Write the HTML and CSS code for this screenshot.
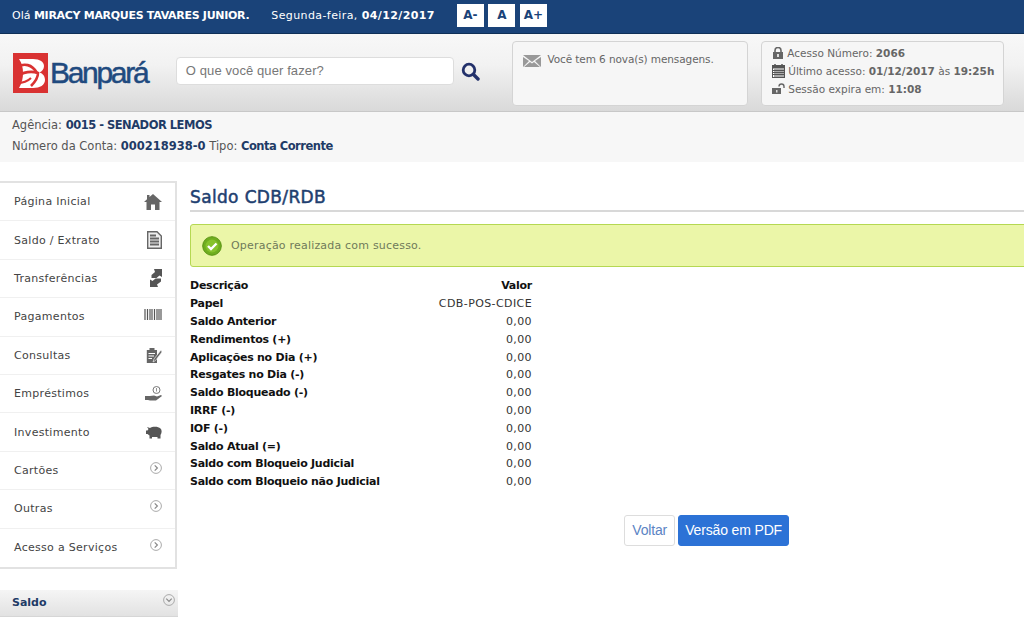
FILE: index.html
```html
<!DOCTYPE html>
<html lang="pt-BR">
<head>
    <meta charset="UTF-8">
    <title>Banpará - Saldo CDB/RDB</title>
    <link rel="stylesheet" href="styles.css">
</head>
<body>
    <div class="topbar">
        <span class="hello">Olá <b>MIRACY MARQUES TAVARES JUNIOR.</b></span>
        <span class="today">Segunda-feira, <b>04/12/2017</b></span>
        <div class="font-btns">
            <span class="font-btn">A-</span>
            <span class="font-btn">A</span>
            <span class="font-btn">A+</span>
        </div>
    </div>

    <div class="header">
        <div class="logo">
            <svg class="logo-mark" width="35" height="40" viewBox="0 0 35 40">
                <rect width="35" height="40" fill="#d93232"/>
                <path d="M6 6H20C27 6 31 9 31 13C31 16 29 18.500 26.500 19.500C30 20.500 32 23.500 32 27C32 32 27 35 20 35H6C9 30 10 25 10 20C10 15 9 10 6 6Z" fill="#fff"/>
                <path d="M4 14C11 10 19 11 24 20" fill="none" stroke="#d93232" stroke-width="2.600"/>
                <path d="M4 23C11 19 19 18 25 20C25 25 22 29 18 33" fill="none" stroke="#d93232" stroke-width="2.600"/>
                <path d="M4 30C10 30 15 28 18 25" fill="none" stroke="#d93232" stroke-width="2"/>
            </svg>
            <span class="logo-text">Banpará</span>
        </div>
        <div class="search">
            <div class="search-input">O que você quer fazer?</div>
            <svg class="search-icon" width="19" height="19" viewBox="0 0 19 19">
                <circle cx="8" cy="8" r="5.800" fill="none" stroke="#23316b" stroke-width="2.800"/>
                <path d="M12.500 12.500 L17 17" stroke="#23316b" stroke-width="3.400" stroke-linecap="round"/>
            </svg>
        </div>
        <div class="box box-msg">
            <svg width="18" height="12" viewBox="0 0 18 12">
                <path d="M0 0H18L9 7Z" fill="#999"/>
                <path d="M0 2V12L6 6ZM18 2V12L12 6ZM1 12H17L11 7L9 8.500L7 7Z" fill="#999"/>
            </svg>
            <span>Você tem 6 nova(s) mensagens.</span>
        </div>
        <div class="box box-access">
            <div class="access-row">
                <svg class="lock" width="10" height="12" viewBox="0 0 10 12">
                    <path d="M2 5V3.500a3 3 0 0 1 6 0V5" fill="none" stroke="#666" stroke-width="1.600"/>
                    <rect y="5" width="10" height="7" fill="#666"/>
                    <rect x="4" y="7" width="2" height="3" fill="#ddd"/>
                </svg>
                <span>Acesso Número: <b>2066</b></span>
            </div>
            <div class="access-row">
                <svg width="13" height="14" viewBox="0 0 13 14">
                    <rect x="0.500" y="1.500" width="12" height="12" fill="#fff" stroke="#555"/>
                    <rect x="0" y="1.500" width="13" height="3" fill="#555"/>
                    <path d="M3 0V3M10 0V3" stroke="#555" stroke-width="1.500"/>
                    <path d="M1 6.500H12M1 8.500H12M1 10.500H12M3 5V13M5 5V13M7 5V13M9 5V13M11 5V13" stroke="#555"/>
                </svg>
                <span>Último acesso: <b>01/12/2017</b> às <b>19:25h</b></span>
            </div>
            <div class="access-row">
                <svg width="13" height="12" viewBox="0 0 13 12">
                    <path d="M7 3.500a2.500 2.500 0 0 1 5 0V5" fill="none" stroke="#666" stroke-width="1.400"/>
                    <rect y="5" width="9" height="6" fill="#666"/>
                    <rect x="4" y="7" width="1.500" height="2.500" fill="#ddd"/>
                </svg>
                <span>Sessão expira em: <b>11:08</b></span>
            </div>
        </div>
    </div>

    <div class="account">
        <div>Agência: <b class="tight">0015 - SENADOR LEMOS</b></div>
        <div>Número da Conta: <b>000218938-0</b> Tipo: <b class="tight">Conta Corrente</b></div>
    </div>

    <div class="main">
        <div class="side">
            <ul class="menu">
                <li><span>Página Inicial</span>
                    <svg width="18" height="16" viewBox="0 0 18 16"><path d="M9 0L18 8H15.500V16H11V10.500H7V16H2.500V8H0L3 5.300V1H5.500V3.100Z" fill="#666"/></svg>
                </li>
                <li><span>Saldo / Extrato</span>
                    <svg width="15" height="18" viewBox="0 0 15 18"><path d="M0.700 0.700H10L14.300 5V17.300H0.700Z" fill="#eee" stroke="#666" stroke-width="1.400"/><path d="M3 4.500H9M3 7.500H12M3 10.500H12M3 13.500H12" stroke="#666" stroke-width="1.800"/></svg>
                </li>
                <li><span>Transferências</span>
                    <svg width="12" height="18" viewBox="0 0 12 18"><path d="M4 0H12V8L9.500 6.500L6.500 9H1.500V6L5 3Z" fill="#555"/><path d="M8 18H0V10.500L2.500 12L5.500 9.500H11V12.500L7 15.500Z" fill="#555"/></svg>
                </li>
                <li class="top"><span>Pagamentos</span>
                    <svg width="18" height="11" viewBox="0 0 18 11"><path d="M1 0V11M3.500 0V11M6 0V11M8 0V11M10.500 0V11M13 0V11M15 0V11M17 0V11" stroke="#555" stroke-width="1.200"/></svg>
                </li>
                <li><span>Consultas</span>
                    <svg width="16" height="15" viewBox="0 0 16 15"><path d="M0.800 2H11V15H0.800Z" fill="#666"/><rect x="3.500" y="0" width="5" height="3" fill="#666"/><path d="M2.500 5.500H9M2.500 8H8M2.500 10.500H6" stroke="#fff"/><path d="M15 2L8 11L7 14L9.500 12.500L16 4Z" fill="#666" stroke="#fff" stroke-width="0.600"/></svg>
                </li>
                <li><span>Empréstimos</span>
                    <svg width="17" height="15" viewBox="0 0 17 15"><circle cx="11.500" cy="4" r="3.500" fill="#fff" stroke="#777"/><path d="M11.500 2V5M11.500 5.500V6.200" stroke="#777" stroke-width="0.800"/><path d="M0 10H5L9 9.500L12 10.500L16 9L17 10L11 14.500H5L3 14H0Z" fill="#666"/></svg>
                </li>
                <li><span>Investimento</span>
                    <svg width="16" height="13" viewBox="0 0 16 13"><path d="M1 1L4 2C6 0.500 12 0 14.500 2.500C16 4 16 7 14.500 9V12.500H11.500V11H6V12.500H3.500V9.500L1.500 8H0V4.500H1.500L2.500 3Z" fill="#555"/></svg>
                </li>
                <li class="top"><span>Cartões</span>
                    <svg class="chev" width="12" height="12" viewBox="0 0 12 12"><circle cx="6" cy="6" r="5.400" fill="none" stroke="#aaa"/><path d="M4.700 3.300L7.400 6L4.700 8.700" fill="none" stroke="#888" stroke-width="1.200"/></svg>
                </li>
                <li class="top"><span>Outras</span>
                    <svg class="chev" width="12" height="12" viewBox="0 0 12 12"><circle cx="6" cy="6" r="5.400" fill="none" stroke="#aaa"/><path d="M4.700 3.300L7.400 6L4.700 8.700" fill="none" stroke="#888" stroke-width="1.200"/></svg>
                </li>
                <li class="top"><span>Acesso a Serviços</span>
                    <svg class="chev" width="12" height="12" viewBox="0 0 12 12"><circle cx="6" cy="6" r="5.400" fill="none" stroke="#aaa"/><path d="M4.700 3.300L7.400 6L4.700 8.700" fill="none" stroke="#888" stroke-width="1.200"/></svg>
                </li>
            </ul>
            <div class="accordion">
                <span>Saldo</span>
                <svg width="12" height="12" viewBox="0 0 12 12"><circle cx="6" cy="6" r="5.400" fill="none" stroke="#aaa"/><path d="M3.300 4.700L6 7.400L8.700 4.700" fill="none" stroke="#888" stroke-width="1.200"/></svg>
            </div>
        </div>

        <div class="content">
            <h1>Saldo CDB/RDB</h1>
            <div class="alert">
                <svg width="20" height="20" viewBox="0 0 20 20">
                    <circle cx="10" cy="10" r="9.300" fill="#6fad1f" stroke="#5a9414"/>
                    <circle cx="10" cy="10" r="6.500" fill="#86c22c"/>
                    <path d="M6 10L9 13L14.500 7.500" fill="none" stroke="#fff" stroke-width="2.400"/>
                </svg>
                <span>Operação realizada com sucesso.</span>
            </div>
            <table class="saldo">
                <tr><th>Descrição</th><th class="val">Valor</th></tr>
                <tr><th>Papel</th><td>CDB-POS-CDICE</td></tr>
                <tr><th>Saldo Anterior</th><td>0,00</td></tr>
                <tr><th>Rendimentos (+)</th><td>0,00</td></tr>
                <tr><th>Aplicações no Dia (+)</th><td>0,00</td></tr>
                <tr><th>Resgates no Dia (-)</th><td>0,00</td></tr>
                <tr><th>Saldo Bloqueado (-)</th><td>0,00</td></tr>
                <tr><th>IRRF (-)</th><td>0,00</td></tr>
                <tr><th>IOF (-)</th><td>0,00</td></tr>
                <tr><th>Saldo Atual (=)</th><td>0,00</td></tr>
                <tr><th>Saldo com Bloqueio Judicial</th><td>0,00</td></tr>
                <tr><th>Saldo com Bloqueio não Judicial</th><td>0,00</td></tr>
            </table>
            <div class="actions">
                <a class="btn btn-light">Voltar</a>
                <a class="btn btn-blue">Versão em PDF</a>
            </div>
        </div>
    </div>
</body>
</html>
```

FILE: styles.css
```css
* {
    box-sizing: border-box;
}
html, body {
    overflow: hidden;
}
body {
    margin: 0;
    height: 643px;
    background: #fff;
    font-family: "DejaVu Sans", sans-serif;
    font-size: 11px;
    color: #555;
}
.topbar {
    height: 34px;
    padding: 0 0 3px 12px;
    display: flex;
    align-items: center;
    background: #1a4379;
    border-bottom: 1px solid #0f3058;
    color: #fff;
    font-size: 11px;
}
.hello b {
    letter-spacing: -0.300px;
}
.today {
    margin-left: 22px;
    letter-spacing: 0.400px;
}
.font-btns {
    display: flex;
    gap: 4.500px;
    margin-left: 22px;
}
.font-btn {
    width: 27px;
    height: 23px;
    background: #fff;
    color: #1a4379;
    font-weight: bold;
    font-size: 12px;
    line-height: 23px;
    text-align: center;
}
.header {
    height: 78px;
    padding: 7px 20px 0 13px;
    display: flex;
    align-items: flex-start;
    background: linear-gradient(#f8f8f8, #f2f2f2 40%, #d9d9d9);
    border-bottom: 1px solid #c8c8c8;
}
.logo {
    display: flex;
    align-items: center;
    width: 163px;
    margin-top: 12px;
}
.logo-text {
    margin-left: 2px;
    font-family: "Liberation Sans", sans-serif;
    font-size: 30px;
    letter-spacing: -2.300px;
    -webkit-text-stroke: 0.500px #1f4a7f;
    color: #1f4a7f;
}
.search {
    display: flex;
    align-items: center;
    gap: 7px;
    width: 336px;
    margin-top: 16px;
}
.search-input {
    width: 278px;
    height: 28px;
    padding-left: 9px;
    background: #fff;
    border: 1px solid #ddd;
    border-radius: 4px;
    font-family: "Liberation Sans", sans-serif;
    font-size: 13px;
    letter-spacing: 0.100px;
    line-height: 26px;
    color: #777;
}
.box {
    height: 65px;
    background: #f6f6f6;
    border: 1px solid #d4d4d4;
    border-radius: 4px;
    color: #666;
}
.box-msg {
    width: 236px;
    margin-left: 1px;
    padding: 11px 10px;
    display: flex;
    align-items: flex-start;
    gap: 6px;
    font-size: 10.500px;
    letter-spacing: -0.100px;
}
.box-msg svg {
    margin-top: 2px;
}
.box-access {
    width: 243px;
    margin-left: 13px;
    padding: 2px 0 2px 10px;
    font-size: 10.500px;
    white-space: nowrap;
}
.access-row {
    display: flex;
    align-items: center;
    gap: 3px;
    height: 18px;
}
.access-row .lock {
    margin: 0 1px;
}
.account {
    height: 50px;
    padding: 3px 12px 0;
    background: #f7f7f7;
    font-size: 11.500px;
    line-height: 21px;
    color: #555;
}
.account b {
    color: #1f3b66;
}
.account .tight {
    letter-spacing: -0.500px;
}
.main {
    display: flex;
    align-items: flex-start;
    padding-top: 19px;
}
.side {
    width: 178px;
    flex-shrink: 0;
}
.menu {
    list-style: none;
    margin: 0;
    padding: 0;
    width: 177px;
    background: #fff;
    border: 2px solid #e2e2e2;
    border-left: 0;
}
.menu li {
    height: 38.400px;
    padding: 0 13px 0 14px;
    display: flex;
    align-items: center;
    justify-content: space-between;
    border-bottom: 1px solid #f0f0f0;
    color: #444;
    font-size: 11px;
    letter-spacing: 0.300px;
}
.menu li:last-child {
    border-bottom: 0;
}
.menu li.top svg {
    margin-bottom: 5px;
}
.accordion {
    height: 27px;
    margin-top: 21px;
    padding: 0 3px 0 12px;
    display: flex;
    align-items: center;
    justify-content: space-between;
    background: linear-gradient(#f5f5f5, #e2e2e2);
    border-bottom: 1px solid #d6d6d6;
    color: #1f3b66;
    font-weight: bold;
    font-size: 11px;
}
.accordion svg {
    margin-bottom: 6px;
}
.content {
    flex: 1;
    min-width: 0;
    padding-left: 12px;
}
.content h1 {
    margin: 0;
    height: 31px;
    padding-top: 1px;
    border-bottom: 2px solid #d8d8d8;
    font-size: 17px;
    font-weight: normal;
    letter-spacing: 0.350px;
    -webkit-text-stroke: 0.500px #1f4070;
    line-height: 31px;
    color: #1f4070;
}
.alert {
    height: 43px;
    margin: 12px -3px 0 0;
    padding-left: 11px;
    display: flex;
    align-items: center;
    gap: 9px;
    background: #ebf6a8;
    border: 1px solid #b5d852;
    border-radius: 3px;
    color: #6f7a5a;
    font-size: 11px;
    letter-spacing: 0.200px;
}
.saldo {
    margin-top: 10px;
    width: 342px;
    border-collapse: collapse;
    font-size: 11px;
}
.saldo th, .saldo td {
    height: 17.800px;
    padding: 0;
    text-align: left;
    color: #111;
}
.saldo th {
    letter-spacing: -0.250px;
}
.saldo td, .saldo .val {
    text-align: right;
}
.saldo td {
    color: #333;
    letter-spacing: 0.400px;
}
.actions {
    display: flex;
    gap: 3px;
    width: 599px;
    justify-content: flex-end;
    margin-top: 24px;
}
.btn {
    height: 31px;
    padding: 0 7px;
    border: 1px solid #ddd;
    border-radius: 3px;
    font-family: "Liberation Sans", sans-serif;
    font-size: 14px;
    letter-spacing: -0.150px;
    line-height: 29px;
}
.btn-light {
    background: #fff;
    color: #5b84c4;
}
.btn-blue {
    padding: 0 6px;
    background: #2c72d6;
    border-color: #2c72d6;
    color: #fff;
}
```
